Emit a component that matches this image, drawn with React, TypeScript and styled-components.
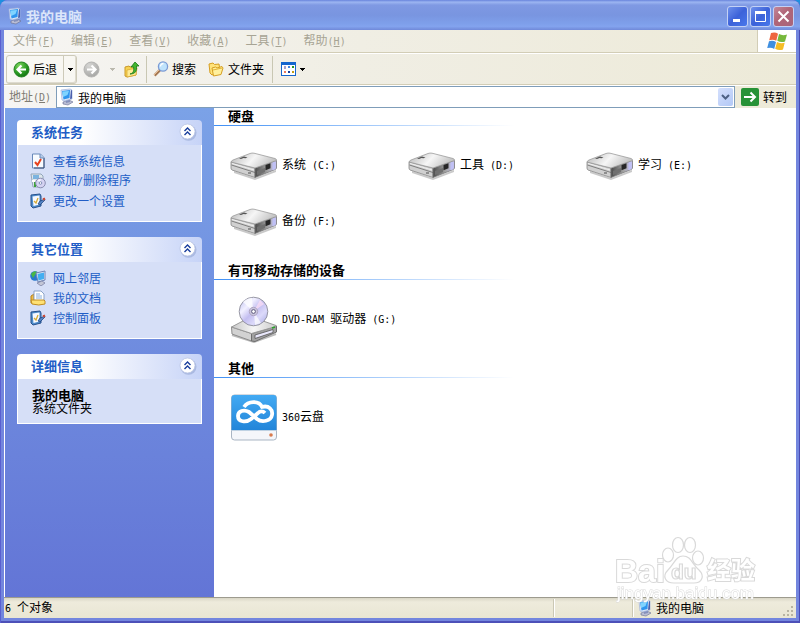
import React, { ReactNode } from "react";
import styled, { createGlobalStyle, css } from "styled-components";

const Global = createGlobalStyle`
  *, *::before, *::after { box-sizing: border-box; }
  html, body, #root { height: 100%; margin: 0; }
  body { background: #1e8fe0; overflow: hidden; }
  body, button, input { font-family: "Noto Sans CJK SC", sans-serif; font-size: 12px; line-height: 16px; color: #000; }
  button { border: 0; padding: 0; background: none; }
  svg { display: block; flex: none; }
  h1, h2, p, ul { margin: 0; padding: 0; }
`;

const Half = styled.span`
  font-family: "DejaVu Sans Mono", monospace;
  font-size: 10px;
  white-space: pre;
`;

const Frame = styled.div`
  display: flex;
  flex-direction: column;
  height: 100vh;
  border-radius: 8px 8px 0 0;
  overflow: hidden;
  background: #7386de;
  box-shadow: inset 1px 0 #5a5fd0, inset -1px 0 #4a4cb4, inset 0 -2px #4d50b8;
`;

const TitleBar = styled.header`
  display: flex;
  align-items: center;
  flex: none;
  gap: 3px;
  height: 30px;
  padding: 2px 6px 0 7px;
  background: linear-gradient(#6884dc 0, #9cb5f1 7%, #7f99e3 17%, #7995e0 50%, #7e9fea 78%, #83a3ee 88%, #7089d9 100%);
`;

const Title = styled.h1`
  flex: 1;
  font-size: 14px;
  line-height: 20px;
  font-weight: 700;
  color: #dbe5fa;
`;

const Caption = styled.div`
  display: flex;
  gap: 2px;
`;

const CaptionButton = styled.button<{ $close?: boolean }>`
  display: grid;
  place-items: center;
  width: 21px;
  height: 21px;
  border: 1px solid #c3d1f5;
  border-radius: 3px;
  background: ${p => p.$close
    ? "linear-gradient(135deg, #c38799, #b06577 45%, #a8657c)"
    : "linear-gradient(135deg, #6f91ec, #3c62d9 50%, #4878ec)"};
`;

const Client = styled.div`
  display: flex;
  flex-direction: column;
  flex: 1;
  min-height: 0;
  margin: 0 4px 5px;
  background: #ece9d8;
`;

const bar = css`
  display: flex;
  flex: none;
  background: linear-gradient(90deg, #f6f5f3, #f0eee4 45%, #edead8);
`;

const MenuBar = styled.nav`
  ${bar}
  height: 23px;
  padding-left: 1px;
  border-bottom: 1px solid #d2cdb6;
`;

const MenuButton = styled.button`
  padding: 0 8px;
  white-space: nowrap;
  color: #a7a494;
`;

const Flag = styled.div`
  display: grid;
  place-items: center;
  width: 39px;
  margin-left: auto;
  border-left: 1px solid #d2cdb6;
  background: #fff;
`;

const ToolBar = styled.div`
  ${bar}
  align-items: center;
  height: 32px;
  padding: 0 2px;
  border-top: 1px solid #fff;
  border-bottom: 1px solid #d2cdb6;
`;

const BackGroup = styled.div`
  display: flex;
  height: 29px;
  border: 1px solid #cdcab9;
  border-radius: 3px;
  background: #f8f7f2;
  box-shadow: inset -1px -1px #dedbcf;
`;

const ToolButton = styled.button<{ $tight?: boolean }>`
  display: flex;
  align-items: center;
  gap: ${p => (p.$tight ? 3 : 4)}px;
  padding: 0 6px;
  white-space: nowrap;
`;

const ArrowButton = styled.button<{ $split?: boolean }>`
  display: grid;
  place-items: center;
  width: ${p => (p.$split ? 13 : 12)}px;
  border-left: ${p => (p.$split ? "1px solid #cdcab9" : "0")};
`;

const Separator = styled.i<{ $spaced?: boolean }>`
  width: 1px;
  height: 27px;
  margin: 0 ${p => (p.$spaced ? 2 : 0)}px;
  background: #c9c7b3;
`;

const AddressBar = styled.form`
  ${bar}
  height: 23px;
  border-top: 1px solid #fff;
`;

const AddressLabel = styled.label`
  width: 52px;
  padding: 2px 0 0 5px;
  color: #7f7c73;
`;

const AddressField = styled.div`
  display: flex;
  align-items: center;
  flex: 1;
  gap: 3px;
  padding: 0 1px 0 2px;
  border: 1px solid #7f9db9;
  background: #fff;
`;

const AddressInput = styled.input`
  flex: 1;
  min-width: 0;
  height: 18px;
  padding: 0;
  border: 0;
  outline: 0;
  background: none;
`;

const DropButton = styled.button`
  display: grid;
  place-items: center;
  width: 15px;
  height: 18px;
  border-radius: 2px;
  background: linear-gradient(135deg, #d5e0fd, #b2c8f6);
`;

const GoButton = styled.button`
  display: flex;
  align-items: center;
  gap: 4px;
  padding: 0 9px 0 6px;
`;

const Body = styled.div`
  display: flex;
  flex: 1;
  min-height: 0;
  background: #fff;
  border-left: 1px solid #fff;
`;

const Side = styled.aside`
  display: flex;
  flex-direction: column;
  flex: none;
  gap: 15px;
  width: 209px;
  padding: 12px;
  background: linear-gradient(#7ba2e7, #6375d6);
`;

const PanelBox = styled.section`
  border-radius: 4px 4px 0 0;
  overflow: hidden;
`;

const PanelHead = styled.div`
  display: flex;
  align-items: center;
  justify-content: space-between;
  height: 25px;
  padding: 0 5px 2px 14px;
  background: linear-gradient(90deg, #fff 35%, #c6d3f7);
`;

const PanelTitle = styled.h2`
  font-size: 13px;
  line-height: 20px;
  color: #215dc6;
`;

const PanelBody = styled.div<{ $details?: boolean }>`
  padding: ${p => (p.$details ? "9px 14px" : "6px 12px 10px")};
  border: 1px solid #fff;
  border-top: 0;
  background: #d6dff7;
`;

const TaskList = styled.ul`
  list-style: none;
`;

const TaskLink = styled.a`
  display: flex;
  align-items: center;
  gap: 7px;
  height: 20px;
  color: #215dc6;
  text-decoration: none;
`;

const DetailLine = styled.p<{ $strong?: boolean }>`
  font-size: ${p => (p.$strong ? 13 : 12)}px;
  font-weight: ${p => (p.$strong ? 700 : 400)};
  line-height: 13px;
`;

const Main = styled.main`
  flex: 1;
  min-width: 0;
  overflow: hidden;
`;

const GroupTitle = styled.h2`
  height: 18px;
  padding-left: 14px;
  font-size: 13px;
  line-height: 16px;
  background: linear-gradient(90deg, #3f8ff5, #fff) 0 100% / 300px 1px no-repeat;
`;

const Grid = styled.div`
  display: grid;
  grid-template-columns: repeat(auto-fill, 178px);
  row-gap: 8px;
  padding: 15px 0 17px 16px;
`;

const Entry = styled.button`
  display: flex;
  align-items: center;
  gap: 4px;
  height: 48px;
  white-space: nowrap;
`;

const StatusBar = styled.footer`
  ${bar}
  position: relative;
  align-items: center;
  height: 21px;
  border-top: 1px solid #9d9b8e;
  background: linear-gradient(#d9d6c6, #eeebdc 4px, #e9e6d3);
`;

const StatusCell = styled.div<{ $w?: number }>`
  display: flex;
  align-items: center;
  gap: 3px;
  height: 18px;
  flex: ${p => (p.$w ? `0 0 ${p.$w}px` : "1")};
  padding-left: ${p => (p.$w ? 4 : 1)}px;
  border-left: ${p => (p.$w ? "1px solid #cbc8b5" : "0")};
  box-shadow: ${p => (p.$w ? "inset 1px 0 #fff" : "none")};
`;

const Grip = styled.div`
  position: absolute;
  right: 2px;
  bottom: 1px;
`;

const Watermark = styled.div`
  position: fixed;
  right: 42px;
  bottom: 16px;
  pointer-events: none;
`;

const Computer = () => (
  <svg width="16" height="18" viewBox="0 0 16 18">
    <path d="M4 14l6-2 4 2-5 3-5-1z" fill="#b9bdd4" stroke="#666d92" strokeWidth=".6" />
    <path d="M7 11l4-1v4l-4 1z" fill="#8590ba" />
    <path d="M2 2l9-1 2 1v9l-8 2-2-1z" fill="#dbe5f7" stroke="#9db2dc" strokeWidth=".7" />
    <path d="M3 3l8-1-.5 8-6 1.500z" fill="#2f95ee" />
    <path d="M3.500 3.500L10 3 8.500 7 4 9z" fill="#7fd4ff" />
    <path d="M12 2l1 .5v8l-2 .5z" fill="#4c60ac" />
  </svg>
);

const Down = ({ color = "#000" }: { color?: string }) => (
  <svg width="5" height="3" viewBox="0 0 5 3" shapeRendering="crispEdges"><path d="M0 0h5v1H4v1H3v1H2V2H1V1H0z" fill={color} /></svg>
);

const RoundArrow = ({ forward }: { forward?: boolean }) => (
  <svg width="17" height="17" viewBox="0 0 17 17">
    <defs>
      <radialGradient id={forward ? "rf" : "rb"} cx=".35" cy=".25" r=".8">
        <stop stopColor={forward ? "#d6d6d4" : "#7ed55e"} />
        <stop offset=".6" stopColor={forward ? "#b9b9b7" : "#2c9b23"} />
        <stop offset="1" stopColor={forward ? "#a5a5a3" : "#127210"} />
      </radialGradient>
    </defs>
    <circle cx="8.500" cy="8.500" r="7.500" fill={`url(#${forward ? "rf" : "rb"})`} stroke={forward ? "#b3b3b1" : "#248522"} />
    <path d={forward ? "M4 8.500h8M8.500 4.500l4 4-4 4" : "M13 8.500H5M8.500 4.500l-4 4 4 4"} fill="none" stroke="#fff" strokeWidth="2.200" />
  </svg>
);

const UpFolder = () => (
  <svg width="16" height="17" viewBox="0 0 16 17">
    <path d="M1 6l4-1 1 1 6-1v9l-9 2-2-1z" fill="#f6d252" stroke="#c9982a" />
    <path d="M3 9l10-2-1 7-9 2z" fill="#ffeb94" stroke="#d6a52e" strokeWidth=".7" />
    <path d="M6 13c4-1 4-4 3.500-7H7l4-5 4 4h-2.500c.5 5-1 8-6.500 8z" fill="#42b52f" stroke="#19761a" strokeWidth=".8" />
  </svg>
);

const Search = () => (
  <svg width="16" height="16" viewBox="0 0 16 16">
    <path d="M1.500 14.500L7 9" stroke="#a47752" strokeWidth="2.600" />
    <path d="M1 14l5-5" stroke="#e9bf94" strokeWidth="1" />
    <circle cx="10" cy="5.500" r="4.600" fill="#bfe3fc" stroke="#7b9bd5" strokeWidth="1.300" />
    <path d="M7.500 5.500c0-2 1.500-3 3-3" stroke="#fff" strokeWidth="1.300" fill="none" />
  </svg>
);

const Folders = () => (
  <svg width="16" height="15" viewBox="0 0 16 15">
    <path d="M1 2l4-1 1.500 1.500L11 2l1 7-8 4-2-2z" fill="#ffe37a" stroke="#d59e22" />
    <path d="M4 6l3.500-1L9 6l5-1.500L15 6l-2 6.500L5.500 14z" fill="#fff09c" stroke="#d59e22" />
    <path d="M5 8l9-2" stroke="#e3b334" />
  </svg>
);

const Views = () => (
  <svg width="15" height="14" viewBox="0 0 15 14" shapeRendering="crispEdges">
    <rect width="15" height="14" fill="#1566ce" /><rect x="1" y="3" width="13" height="10" fill="#fff" />
    <path d="M3 4h2v3H3z" fill="#aaa0c8" /><path d="M7 4h2v2H7z" fill="#4484df" /><path d="M11 4h2v2h-2z" fill="#289421" />
    <path d="M3 9h2v2H3z" fill="#ef795c" /><path d="M7 9h2v2H7z" fill="#153f9c" /><path d="M11 9h2v2h-2z" fill="#c49d15" />
  </svg>
);

const WindowsFlag = () => (
  <svg width="20" height="19" viewBox="0 0 20 19">
    <path d="M4 1q4-1.500 7 .7L9.300 8.700Q6 7 2.200 8.200z" fill="#ee6640" />
    <path d="M12 2q3.500 2 8 .5l-2 7q-4 1.300-7.700-.7z" fill="#76b83b" />
    <path d="M2 9.300q3.700-1.200 7 .6l-1.800 7q-3-2-7-.8z" fill="#3f8fe0" />
    <path d="M10 10q4 2 7.700.8L16 17.500q-4 1.500-7.800-.7z" fill="#f5bd26" />
  </svg>
);

const Chevrons = () => (
  <svg width="18" height="18" viewBox="0 0 18 18">
    <circle cx="9.500" cy="9.800" r="8" fill="#8fa2cf" opacity=".55" />
    <circle cx="8.500" cy="8.500" r="7.500" fill="#fff" stroke="#b7c3e2" strokeWidth=".8" />
    <path d="M5.500 8l3-3 3 3M5.500 12l3-3 3 3" fill="none" stroke="#183d9c" strokeWidth="1.400" />
  </svg>
);

const InfoIcon = () => (
  <svg width="16" height="16" viewBox="0 0 16 16">
    <path d="M2.500 1h8L14 4.500V15H2.500z" fill="#f8fbff" stroke="#6989b9" /><path d="M14 5v10H4" stroke="#3e5174" fill="none" />
    <path d="M10 1v4h4" fill="#b7cdec" stroke="#6989b9" /><path d="M5 9l2.500 3L11 6" fill="none" stroke="#e7431f" strokeWidth="2" />
  </svg>
);
const ProgramsIcon = () => (
  <svg width="16" height="16" viewBox="0 0 16 16">
    <path d="M1 1h10l2 2v11H3z" fill="#dfe7ed" stroke="#93a6b8" /><path d="M3 2h6v4H3z" fill="#7bb3df" />
    <path d="M4 9h2v5H4z" fill="#3da43a" /><path d="M2 7h3v2H2z" fill="#fff" />
    <circle cx="10.500" cy="10" r="4.800" fill="#d5d3f2" stroke="#898daf" /><path d="M10.500 10l-3-3 3-1z" fill="#fff" /><circle cx="10.500" cy="10" r="1.300" fill="#fff" stroke="#8290b7" />
  </svg>
);
const SettingsIcon = () => (
  <svg width="16" height="16" viewBox="0 0 16 16">
    <path d="M1 2l9-1 1 2v10l-8 2-2-2z" fill="#4d8ccb" stroke="#27508c" /><path d="M2.500 3.500l7-1v9l-6 1.500z" fill="#f7f9ff" />
    <path d="M4 8l2 2 2-5" stroke="#d6ac36" fill="none" strokeWidth="1.300" /><path d="M8 11l2-3 3-1 1-2 1 2-2 2-3 3z" fill="#5383c3" stroke="#173e78" strokeWidth=".7" /><path d="M13 6.500l2-1" stroke="#d24931" strokeWidth="2" />
  </svg>
);
const NetworkIcon = () => (
  <svg width="16" height="16" viewBox="0 0 16 16">
    <circle cx="5" cy="6" r="4.800" fill="#2879cd" /><path d="M1 4q3-4 6-2L5 5 3 8z" fill="#49b745" />
    <path d="M6 3l9-2v9l-7 2z" fill="#dde8f6" stroke="#7084b6" /><path d="M7.500 4L14 2.500V9l-5.500 1.500z" fill="#43aef1" />
    <path d="M7 13l5-2 3 2-4 3z" fill="#c3c6d6" stroke="#737a9e" strokeWidth=".7" />
  </svg>
);
const DocumentsIcon = () => (
  <svg width="16" height="16" viewBox="0 0 16 16">
    <path d="M1 6l3-2v9H1z" fill="#efbc45" stroke="#b6821d" /><path d="M4 1h7l3 3v8H4z" fill="#fff" stroke="#8ba3c8" />
    <path d="M6 4h4M6 6h6M6 8h6" stroke="#88afe0" /><path d="M1 10h13l1 1v3q-6 2-13 0z" fill="#ffe174" stroke="#bf8c24" />
  </svg>
);

const Drive = () => (
  <svg width="48" height="48" viewBox="0 0 48 48">
    <defs>
      <linearGradient id="dt" x2="1" y2=".3"><stop stopColor="#b4b4b4" /><stop offset=".55" stopColor="#f6f6f6" /><stop offset="1" stopColor="#c4c4c4" /></linearGradient>
      <linearGradient id="df"><stop stopColor="#4a4a4a" /><stop offset=".6" stopColor="#a5a5a5" /><stop offset="1" stopColor="#c8c5f3" /></linearGradient>
    </defs>
    <path d="M4 30l21 7 21-8v2L25 39 4 32z" fill="#777" opacity=".4" />
    <path d="M1 21l24 6v9.500L2 29q-1-.5-1-2z" fill="#d0d0d0" stroke="#858585" strokeWidth=".8" />
    <path d="M25 27l21.500-7.500V27q0 1-2 1.800L25 36.500z" fill="url(#df)" stroke="#777" strokeWidth=".8" />
    <path d="M1 21q0-1 2-2l17-6.500q2-.7 4-.3l21 5.300q2 .8 1.500 2L25 27z" fill="url(#dt)" stroke="#9a9a9a" strokeWidth=".8" />
    <path d="M1.500 24L25 31.500" stroke="#686868" strokeWidth=".8" />
    <path d="M2 22.500l22 6.500" stroke="#efefef" />
    <path d="M27 30l8-3v4l-8 3z" fill="#6f6f6f" />
    <path d="M9 17.500l5-2 3.500 1-2 .8-2-.4-2.500 1z" fill="#555" />
    <path d="M35.500 24l5-1.700v5l-5 2z" fill="#262626" />
    <path d="M42.500 21.500l3-1v7.500l-3 1.200z" fill="#bfc0f5" />
    <path d="M18 32h3" stroke="#4c4c4c" />
  </svg>
);

const Dvd = () => (
  <svg width="48" height="48" viewBox="0 0 48 48">
    <defs>
      <linearGradient id="disc" x2="1" y2="1"><stop stopColor="#b9baf0" /><stop offset=".3" stopColor="#f1f0ff" /><stop offset=".5" stopColor="#c3bdf0" /><stop offset=".7" stopColor="#dcdafa" /><stop offset="1" stopColor="#a0a3e3" /></linearGradient>
      <linearGradient id="dvdtop" x2="1"><stop stopColor="#c8c8c8" /><stop offset=".5" stopColor="#f6f6f6" /><stop offset="1" stopColor="#ccc" /></linearGradient>
    </defs>
    <path d="M2 40l22 7 22-8" fill="none" stroke="#bbb" strokeWidth="2" />
    <path d="M1.500 32l20 6.500V46L2 39z" fill="#d2d2d2" stroke="#8c8c8c" /><path d="M21.500 38.500L46.500 31v6L25 46.500l-3.500-.5z" fill="#a2a2a2" stroke="#6f6f6f" />
    <path d="M1.500 32L13 26h20l13 4.500v1l-24.500 7z" fill="url(#dvdtop)" stroke="#999" />
    <path d="M25 40l18-5.500v3L25 43.500z" fill="#e9e8fb" stroke="#555" strokeWidth=".8" /><path d="M42 33l3-1" stroke="#29a329" strokeWidth="1.500" />
    <circle cx="23.500" cy="16.500" r="14.300" fill="url(#disc)" stroke="#8c8c98" strokeWidth=".9" />
    <path d="M23 16L13 7q4-4 9-4.300z" fill="#fff" opacity=".75" /><path d="M24 17l1 13 6-2z" fill="#fff" opacity=".7" />
    <path d="M24 16l6-11 4 4z" fill="#ffdff5" opacity=".7" />
    <circle cx="23.500" cy="16.500" r="4.200" fill="#c8c4dc" stroke="#afa5c3" /><circle cx="23.500" cy="16.500" r="1.900" fill="#fff" stroke="#5e597c" />
  </svg>
);

const Cloud = () => (
  <svg width="48" height="48" viewBox="0 0 48 48">
    <defs><linearGradient id="cl" x2="0" y2="1"><stop stopColor="#43aaf3" /><stop offset="1" stopColor="#2285d9" /></linearGradient></defs>
    <rect x="1.500" y="2" width="45" height="45" rx="3" fill="#f4f6fa" stroke="#a9b5c3" />
    <path d="M1.500 37V5q0-3 3-3h39q3 0 3 3v32z" fill="url(#cl)" />
    <path d="M14 14c4-6 15-7 18 0 7-2 11 3 10 8-1 6-10 8-15 4l-8-7c-5-3-11-1-11 4 0 6 8 7 13 3l7-6c2-2 5-2 7 0" fill="none" stroke="#fff" strokeWidth="3.800" strokeLinejoin="round" />
    <path d="M1.500 37.500h45" stroke="#bfd2e3" /><circle cx="41" cy="42" r="1.800" fill="#d87b4e" />
  </svg>
);

const Panel = ({ title, details, children }: { title: string; details?: boolean; children: ReactNode }) => (
  <PanelBox>
    <PanelHead><PanelTitle>{title}</PanelTitle><button aria-label={`收起${title}`}><Chevrons /></button></PanelHead>
    <PanelBody $details={details}>{children}</PanelBody>
  </PanelBox>
);

const Task = ({ icon, children }: { icon: ReactNode; children: ReactNode }) => (
  <li><TaskLink href="#">{icon}<span>{children}</span></TaskLink></li>
);

const menus = [["文件", "F"], ["编辑", "E"], ["查看", "V"], ["收藏", "A"], ["工具", "T"], ["帮助", "H"]];
const drives = [["系统", "C"], ["工具", "D"], ["学习", "E"], ["备份", "F"]];

export default function App() {
  return (
    <>
      <Global />
      <Frame>
        <TitleBar>
          <Computer />
          <Title>我的电脑</Title>
          <Caption>
            <CaptionButton aria-label="最小化"><svg width="13" height="13"><path d="M2 9h7v3H2z" fill="#fff" /></svg></CaptionButton>
            <CaptionButton aria-label="最大化"><svg width="13" height="13"><path d="M1.500 2.500h10v9h-10z" fill="none" stroke="#fff" /><path d="M1 1h11v3H1z" fill="#fff" /></svg></CaptionButton>
            <CaptionButton $close aria-label="关闭"><svg width="13" height="13"><path d="M1.500 1.500l10 10M11.500 1.500l-10 10" stroke="#fff" strokeWidth="2" /></svg></CaptionButton>
          </Caption>
        </TitleBar>
        <Client>
          <MenuBar>
            {menus.map(([name, key]) => <MenuButton key={key}>{name}<Half>(<u>{key}</u>)</Half></MenuButton>)}
            <Flag><WindowsFlag /></Flag>
          </MenuBar>
          <ToolBar>
            <BackGroup>
              <ToolButton $tight><RoundArrow />后退</ToolButton>
              <ArrowButton $split aria-label="后退列表"><Down /></ArrowButton>
            </BackGroup>
            <ToolButton aria-label="前进"><RoundArrow forward /></ToolButton>
            <ArrowButton aria-label="前进列表"><Down color="#bbb9ae" /></ArrowButton>
            <ToolButton aria-label="向上"><UpFolder /></ToolButton>
            <Separator />
            <ToolButton $tight><Search />搜索</ToolButton>
            <ToolButton><Folders />文件夹</ToolButton>
            <Separator $spaced />
            <ToolButton aria-label="查看"><Views /><Down /></ToolButton>
          </ToolBar>
          <AddressBar onSubmit={e => e.preventDefault()}>
            <AddressLabel htmlFor="address">地址<Half>(<u>D</u>)</Half></AddressLabel>
            <AddressField>
              <Computer />
              <AddressInput id="address" defaultValue="我的电脑" />
              <DropButton type="button" aria-label="地址列表"><svg width="9" height="6"><path d="M1 1l3.500 3.500L8 1" fill="none" stroke="#4d6185" strokeWidth="2" /></svg></DropButton>
            </AddressField>
            <GoButton>
              <svg width="18" height="18" viewBox="0 0 18 18"><rect width="18" height="18" rx="2" fill="#279237" /><path d="M3 9h11M9.500 4.500L14 9l-4.500 4.500" fill="none" stroke="#fff" strokeWidth="2" /></svg>
              转到
            </GoButton>
          </AddressBar>
          <Body>
            <Side>
              <Panel title="系统任务"><TaskList>
                <Task icon={<InfoIcon />}>查看系统信息</Task>
                <Task icon={<ProgramsIcon />}>添加<Half>/</Half>删除程序</Task>
                <Task icon={<SettingsIcon />}>更改一个设置</Task>
              </TaskList></Panel>
              <Panel title="其它位置"><TaskList>
                <Task icon={<NetworkIcon />}>网上邻居</Task>
                <Task icon={<DocumentsIcon />}>我的文档</Task>
                <Task icon={<SettingsIcon />}>控制面板</Task>
              </TaskList></Panel>
              <Panel title="详细信息" details>
                <DetailLine $strong>我的电脑</DetailLine>
                <DetailLine>系统文件夹</DetailLine>
              </Panel>
            </Side>
            <Main>
              <GroupTitle>硬盘</GroupTitle>
              <Grid>{drives.map(([name, letter]) => <Entry key={letter}><Drive /><span>{name}<Half>{` (${letter}:)`}</Half></span></Entry>)}</Grid>
              <GroupTitle>有可移动存储的设备</GroupTitle>
              <Grid><Entry><Dvd /><span><Half>DVD-RAM </Half>驱动器<Half>{" (G:)"}</Half></span></Entry></Grid>
              <GroupTitle>其他</GroupTitle>
              <Grid><Entry><Cloud /><span><Half>360</Half>云盘</span></Entry></Grid>
            </Main>
          </Body>
          <StatusBar>
            <StatusCell><span><Half>6 </Half>个对象</span></StatusCell>
            <StatusCell $w={79} />
            <StatusCell $w={164}><Computer />我的电脑</StatusCell>
            <Grip><svg width="12" height="12" shapeRendering="crispEdges"><path d="M9 1h2v2H9zM5 5h2v2H5zM9 5h2v2H9zM1 9h2v2H1zM5 9h2v2H5zM9 9h2v2H9z" fill="#b8b4a2" /></svg></Grip>
          </StatusBar>
        </Client>
      </Frame>
      <Watermark>
        <svg width="146" height="72" viewBox="0 0 146 72" fill="#fff" stroke="#d9d9d9" strokeWidth="1.200">
          <g paintOrder="stroke" fontFamily="Liberation Sans" fontWeight="700">
            <text x="3" y="47" fontSize="32" strokeWidth="2">Bai</text>
            <text x="95" y="44" fontSize="24" fontFamily="Noto Sans CJK SC" strokeWidth="2">经验</text>
            <text x="5" y="64" fontSize="17" fontWeight="400" strokeWidth="1">jingyan.baidu.com</text>
          </g>
          <ellipse cx="56" cy="20" rx="5.500" ry="7" /><ellipse cx="66" cy="10" rx="5.500" ry="7.500" /><ellipse cx="78" cy="10" rx="5.500" ry="7.500" /><ellipse cx="86" cy="23" rx="5.500" ry="7" />
          <path d="M71 21c8 0 9 8 16 14 6 6 3 13-5 13H62c-9 0-12-7-6-13 6-6 8-14 15-14z" />
          <text x="59" y="44" fontSize="21" fontFamily="Liberation Sans" fontWeight="700">du</text>
        </svg>
      </Watermark>
    </>
  );
}
